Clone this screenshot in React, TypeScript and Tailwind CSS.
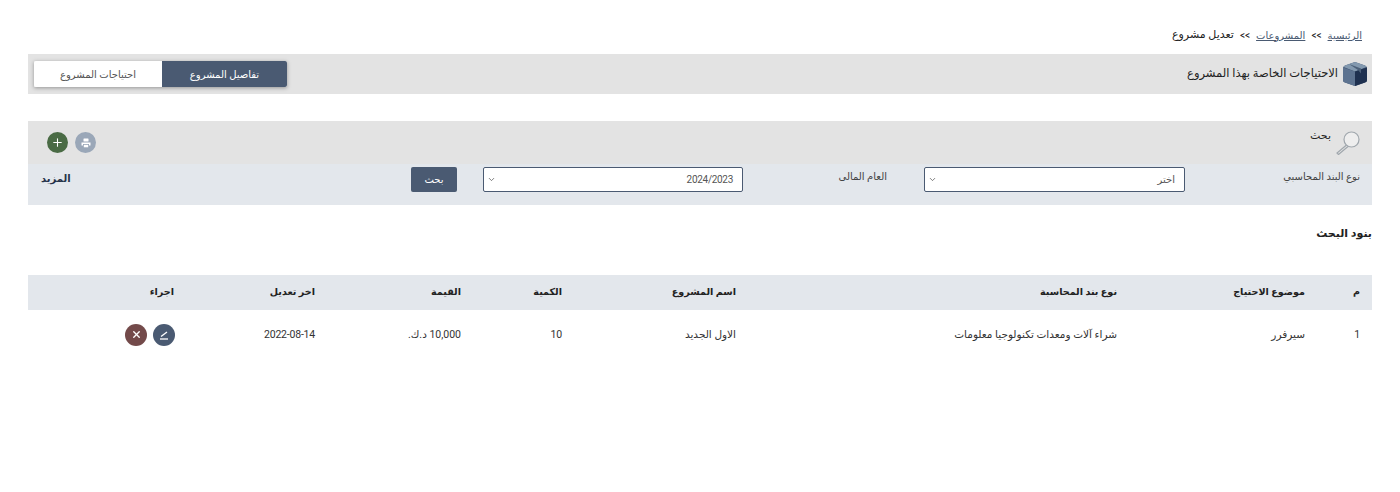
import { ChevronDown, Plus, X } from 'lucide-react';

const COLUMNS = [
  { label: 'م', width: 'w-[55px]' },
  { label: 'موضوع الاحتياج', width: 'w-[188px]' },
  { label: 'نوع بند المحاسبة', width: 'w-[381px]' },
  { label: 'اسم المشروع', width: 'w-[174px]' },
  { label: 'الكمية', width: 'w-[101px]' },
  { label: 'القيمة', width: 'w-[146px]' },
  { label: 'اخر تعديل', width: 'w-[141px]' },
  { label: 'اجراء', width: 'w-[158px]' },
];

const ROW = ['1', 'سيرفرر', 'شراء آلات ومعدات تكنولوجيا معلومات', 'الاول الجديد', '10', '10,000 د.ك.', '2022-08-14'];

const BoxIcon = () => (
  <svg width="24" height="24" viewBox="0 0 24 24">
    <path d="M12 0 22 3.500Q24 4.500 24 6V18Q24 20 22 20.500L12 24 2 20.500Q0 20 0 18V6Q0 4.500 2 3.500Z" fill="#3f5370" />
    <path d="M12 0 22 3.500Q23.500 4.200 23.500 5L12 9.500 0.500 5Q0.500 4.200 2 3.500Z" fill="#8399af" />
    <path d="M0 5.500 12 9.500V24L2 20.500Q0 20 0 18Z" fill="#5d7390" />
    <path d="M24 5.500 12 9.500V24L22 20.500Q24 20 24 18Z" fill="#1f3150" />
    <path d="M6 2 18 6.500V11.500L15 8Z" fill="#4c6079" />
  </svg>
);

const SearchIcon = () => (
  <svg width="24" height="24" viewBox="0 0 24 24" fill="none" stroke="#a0a7ad" strokeWidth="1.2">
    <circle cx="15.500" cy="8.500" r="7.500" fill="#eeeeee" />
    <path d="M10.500 14 1 22 2.500 23.500 12 15.500" />
  </svg>
);

const PrintIcon = () => (
  <svg width="10" height="10" viewBox="0 0 10 10" fill="#fff">
    <rect x="2.500" y="0.500" width="5" height="3" rx="0.500" />
    <path d="M0.500 4.500H9.500V7.500H8V6H2V7.500H0.500Z" />
    <rect x="2.800" y="6.800" width="4.400" height="2.500" />
  </svg>
);

const EditIcon = () => (
  <svg width="12" height="12" viewBox="0 0 12 12" fill="none" stroke="#fff" strokeWidth="1.300">
    <path d="M3 7.500 9 3" />
    <path d="M2 10H10" />
  </svg>
);

const Field = ({ value, width }: { value: string; width: string }) => (
  <div className={`flex h-[25px] items-center justify-between rounded-[2px] border border-[#4a5a72] bg-white pr-[9px] pl-[3px] text-[10px] tracking-[-0.3px] text-[#555] ${width}`}>
    <span>{value}</span>
    <ChevronDown size={9} className="text-[#555]" />
  </div>
);

export default function App() {
  return (
    <div dir="rtl" className="min-h-[492px] bg-white px-[28px] pt-[28px] text-[#222] [font-family:Roboto,'DejaVu_Sans',sans-serif]">
      <div className="flex h-[14px] items-center gap-[5px] pr-[10px] text-[10px]">
        <span className="text-[#4a5a72] underline">الرئيسية</span>
        <span className="px-[1px]">&gt;&gt;</span>
        <span className="text-[#4a5a72] underline">المشروعات</span>
        <span className="px-[1px]">&gt;&gt;</span>
        <span className="text-[11px]">تعديل مشروع</span>
      </div>

      <div className="mt-[12px] flex h-[40px] items-center justify-between bg-[#e3e3e3] pr-[5px] pl-[6px]">
        <div className="flex items-center gap-[5px] text-[11.500px] text-[#222]">
          <BoxIcon />
          <span>الاحتياجات الخاصة بهذا المشروع</span>
        </div>
        <div className="flex h-[26px] shadow-[0_1px_4px_rgba(0,0,0,0.35)]">
          <div className="flex w-[125px] items-center justify-center rounded-r-[2px] bg-[#4a5a72] text-[10px] text-white">تفاصيل المشروع</div>
          <div className="flex w-[128px] items-center justify-center rounded-l-[2px] bg-white text-[10px] text-[#555]">احتياجات المشروع</div>
        </div>
      </div>

      <div className="mt-[27px]">
        <div className="flex h-[43px] items-center justify-between bg-[#e3e3e3] pr-[12px] pl-[19px]">
          <div className="flex items-center gap-[5px] text-[11px]">
            <SearchIcon />
            <span className="mb-[12px]">بحث</span>
          </div>
          <div className="flex gap-[7px]">
            <div className="flex size-[21px] items-center justify-center rounded-full bg-[#9aa7b8]"><PrintIcon /></div>
            <div className="flex size-[21px] items-center justify-center rounded-full bg-[#4a6b45] text-white"><Plus size={13} /></div>
          </div>
        </div>
        <div className="flex h-[41px] items-start bg-[#e3e7ec] pt-[3px] text-[10px]">
          <span className="mt-[2px] w-[187px] pr-[12px] text-[#444]">نوع البند المحاسبي</span>
          <Field value="اختر" width="w-[261px]" />
          <span className="mt-[2px] w-[181px] pr-[37px] text-[#444]">العام المالى</span>
          <Field value="2024/2023" width="w-[260px]" />
          <div className="mr-[26px] flex h-[25px] w-[46px] items-center justify-center rounded-[2px] bg-[#4a5a72] text-white">بحث</div>
          <span className="mt-[4px] mr-auto ml-[13px] font-bold text-[#263249]">المزيد</span>
        </div>
      </div>

      <h2 className="mt-[21px] text-[11px] font-bold text-[#222]">بنود البحث</h2>

      <table className="mt-[32px] w-full table-fixed border-collapse text-[9.600px]">
        <thead>
          <tr className="h-[35px] bg-[#e3e7ec]">
            {COLUMNS.map((col) => (
              <th key={col.label} className={`pr-[12px] text-right font-bold ${col.width}`}>{col.label}</th>
            ))}
          </tr>
        </thead>
        <tbody>
          <tr className="h-[50px]">
            {ROW.map((cell) => (
              <td key={cell} className="pr-[12px] text-right text-[10.500px] tracking-[-0.2px] text-[#333]">{cell}</td>
            ))}
            <td className="pr-[11px]">
              <div className="flex gap-[6px]">
                <div className="flex size-[22px] items-center justify-center rounded-full bg-[#4a5a72]"><EditIcon /></div>
                <div className="flex size-[22px] items-center justify-center rounded-full bg-[#734a4a] text-white"><X size={11} strokeWidth={3} /></div>
              </div>
            </td>
          </tr>
        </tbody>
      </table>
    </div>
  );
}
